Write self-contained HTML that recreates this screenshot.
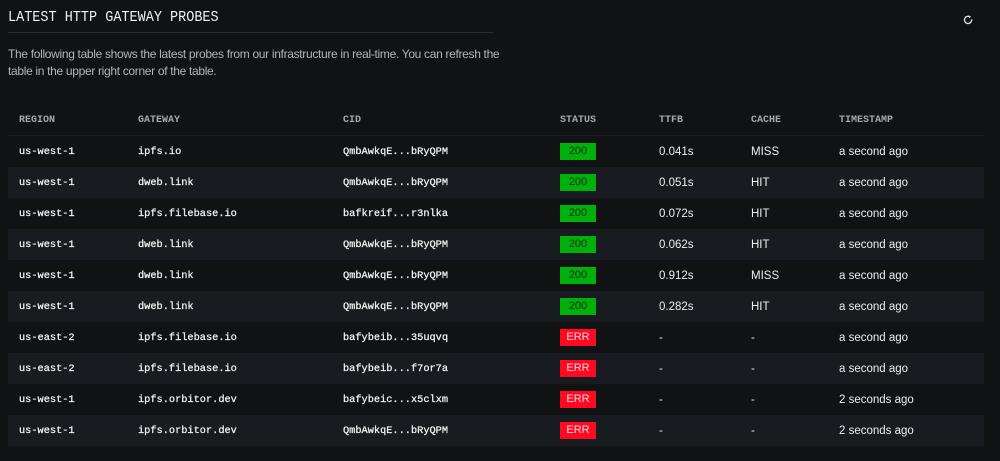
<!DOCTYPE html>
<html><head><style>
body{margin:0;background:#111214;width:1000px;height:461px;overflow:hidden;color:#e8e8e8;font-family:"Liberation Sans",sans-serif}
h1{position:absolute;left:8px;top:10px;margin:0;font:13.5px "Liberation Mono",monospace;color:#f2f2f2;transform:scaleY(1.1);transform-origin:top left}
.hr{position:absolute;left:8px;top:32px;width:485px;height:1px;background:#2a2c30}
p{position:absolute;left:8px;top:46px;margin:0;width:495px;font-size:12px;letter-spacing:-0.32px;line-height:17px;color:#b4b4b4}
.ic{position:absolute;left:963px;top:15px;width:10px;height:10px}
table{position:absolute;left:8px;top:105px;width:976px;border-collapse:collapse}
td,th{padding:0 0 0 11px;text-align:left;height:31px;white-space:nowrap}
th{font:bold 10px "Liberation Mono",monospace;color:#a8a8a8;height:30px;border-bottom:1px solid #1c1f22}
td{font-size:11.5px;color:#eee}
.m{font-family:"Liberation Mono",monospace;font-size:10.3px;color:#f4f4f4;-webkit-text-stroke:0.25px #f4f4f4}
tr.a td{background:#181c20}
.b{display:inline-block;width:36px;height:17px;line-height:17px;text-align:center;font-size:11px}
.g{background:#00b10b;color:#0c2e0c}.r{background:#ff0a22;color:#ffd8d8}
</style></head><body>
<h1>LATEST HTTP GATEWAY PROBES</h1><div class="hr"></div>
<p>The following table shows the latest probes from our infrastructure in real-time. You can refresh the table in the upper right corner of the table.</p>
<svg class="ic" viewBox="0 0 10 10"><path d="M6.5 1.6A3.6 3.6 0 1 0 8.6 4.2" fill="none" stroke="#ddd" stroke-width="1.3"/><path d="M5.5 0.4L8 1.6 6.2 3.4z" fill="#ddd"/></svg>
<table>
<colgroup><col style="width:119px"><col style="width:205px"><col style="width:217px"><col style="width:99px"><col style="width:92px"><col style="width:88px"><col></colgroup>
<tr><th>REGION</th><th>GATEWAY</th><th>CID</th><th>STATUS</th><th>TTFB</th><th>CACHE</th><th>TIMESTAMP</th></tr>
<tr><td class="m">us-west-1</td><td class="m">ipfs.io</td><td class="m">QmbAwkqE...bRyQPM</td><td><span class="b g">200</span></td><td>0.041s</td><td>MISS</td><td>a second ago</td></tr>
<tr class="a"><td class="m">us-west-1</td><td class="m">dweb.link</td><td class="m">QmbAwkqE...bRyQPM</td><td><span class="b g">200</span></td><td>0.051s</td><td>HIT</td><td>a second ago</td></tr>
<tr><td class="m">us-west-1</td><td class="m">ipfs.filebase.io</td><td class="m">bafkreif...r3nlka</td><td><span class="b g">200</span></td><td>0.072s</td><td>HIT</td><td>a second ago</td></tr>
<tr class="a"><td class="m">us-west-1</td><td class="m">dweb.link</td><td class="m">QmbAwkqE...bRyQPM</td><td><span class="b g">200</span></td><td>0.062s</td><td>HIT</td><td>a second ago</td></tr>
<tr><td class="m">us-west-1</td><td class="m">dweb.link</td><td class="m">QmbAwkqE...bRyQPM</td><td><span class="b g">200</span></td><td>0.912s</td><td>MISS</td><td>a second ago</td></tr>
<tr class="a"><td class="m">us-west-1</td><td class="m">dweb.link</td><td class="m">QmbAwkqE...bRyQPM</td><td><span class="b g">200</span></td><td>0.282s</td><td>HIT</td><td>a second ago</td></tr>
<tr><td class="m">us-east-2</td><td class="m">ipfs.filebase.io</td><td class="m">bafybeib...35uqvq</td><td><span class="b r">ERR</span></td><td>-</td><td>-</td><td>a second ago</td></tr>
<tr class="a"><td class="m">us-east-2</td><td class="m">ipfs.filebase.io</td><td class="m">bafybeib...f7or7a</td><td><span class="b r">ERR</span></td><td>-</td><td>-</td><td>a second ago</td></tr>
<tr><td class="m">us-west-1</td><td class="m">ipfs.orbitor.dev</td><td class="m">bafybeic...x5clxm</td><td><span class="b r">ERR</span></td><td>-</td><td>-</td><td>2 seconds ago</td></tr>
<tr class="a"><td class="m">us-west-1</td><td class="m">ipfs.orbitor.dev</td><td class="m">QmbAwkqE...bRyQPM</td><td><span class="b r">ERR</span></td><td>-</td><td>-</td><td>2 seconds ago</td></tr>
</table>
</body></html>
